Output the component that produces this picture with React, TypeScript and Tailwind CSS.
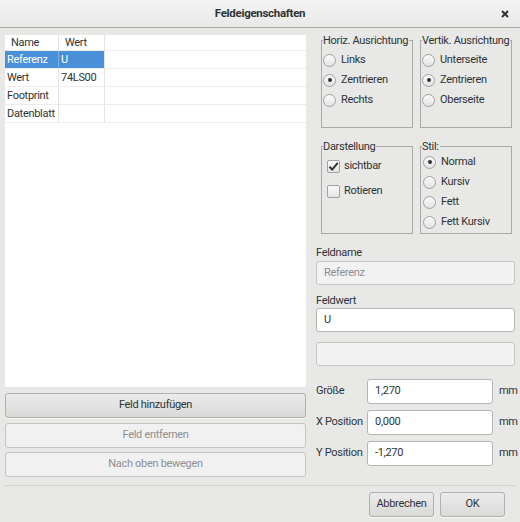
import React from "react";

const font = { fontFamily: "Roboto, 'Noto Sans', sans-serif" };

function Radio({ checked, label }: { checked?: boolean; label: string }) {
  return (
    <div className="flex h-[20px] items-center gap-[5px] whitespace-nowrap">
      <span className="flex h-[13px] w-[13px] shrink-0 items-center justify-center rounded-full border border-[#a1a1a1] bg-gradient-to-b from-[#fbfbfb] to-[#e3e3e3]">
        {checked && <span className="h-[4px] w-[4px] rounded-full bg-[#2e3436]" />}
      </span>
      <span>{label}</span>
    </div>
  );
}

function Check({ checked, label }: { checked?: boolean; label: string }) {
  return (
    <div className="flex h-[25px] items-center gap-[4px] whitespace-nowrap pl-[5px]">
      <span className="flex h-[13px] w-[13px] shrink-0 items-center justify-center rounded-[2px] border border-[#a1a1a1] bg-gradient-to-b from-[#fbfbfb] to-[#e3e3e3]">
        {checked && (
          <svg width="11" height="11" viewBox="0 0 11 11">
            <path d="M1.5 5.8 L4.2 8.6 L9.8 1.8" fill="none" stroke="#2e3436" strokeWidth="2" />
          </svg>
        )}
      </span>
      <span>{label}</span>
    </div>
  );
}

function Group({ title, children }: { title: string; children: React.ReactNode }) {
  return (
    <div className="relative h-[88px] w-[92px] border border-[#a9a9a7]">
      <span className="absolute left-[1px] top-[-7px] whitespace-nowrap bg-[#e8e8e7] pr-[1px] leading-[14px]">
        {title}
      </span>
      {children}
    </div>
  );
}

function Btn({ children, disabled, className }: { children: React.ReactNode; disabled?: boolean; className?: string }) {
  return (
    <div
      className={
        "flex items-center justify-center whitespace-nowrap rounded-[3px] border " +
        (disabled
          ? "border-[#c5c5c3] bg-[#f1f1f1] text-[#8f9091]"
          : "border-[#b0b0ae] bg-gradient-to-b from-[#ececec] to-[#d9d9d8] text-[#2e3436] shadow-[0_1px_0_rgba(255,255,255,0.6)]") +
        " " +
        (className ?? "")
      }
    >
      {children}
    </div>
  );
}

function Input({ value, disabled, className }: { value?: string; disabled?: boolean; className?: string }) {
  return (
    <div
      className={
        "flex items-center rounded-[3px] border px-[7px] " +
        (disabled ? "border-[#c5c5c3] bg-[#f2f2f2] text-[#8f9091]" : "border-[#b6b6b3] bg-white text-[#2e3436]") +
        " " +
        (className ?? "")
      }
    >
      {value}
    </div>
  );
}

export default function App() {
  const rows = [
    ["Referenz", "U"],
    ["Wert", "74LS00"],
    ["Footprint", ""],
    ["Datenblatt", ""],
  ];
  return (
    <div
      style={font}
      className="flex h-[522px] w-[520px] flex-col bg-[#e8e8e7] text-[11px] tracking-[-0.3px] text-[#2e3436]"
    >
      {/* title bar */}
      <div className="relative flex h-[28px] items-center justify-center border-b border-[#a8a8a6] bg-gradient-to-b from-[#f4f4f4] to-[#e9e9e8]">
        <span className="text-[11.5px] font-bold tracking-[-0.3px] text-[#2e3436]">Feldeigenschaften</span>
        <svg className="absolute right-[11px] top-[10px]" width="8" height="8" viewBox="0 0 8 8">
          <path d="M1 1 L7 7 M7 1 L1 7" stroke="#2e3436" strokeWidth="2" />
        </svg>
      </div>

      {/* body */}
      <div className="flex flex-1 gap-[10px] px-[5px] pt-[7px]">
        {/* left */}
        <div className="flex w-[301px] flex-col">
          <div className="h-[352px] bg-white">
            <div className="flex h-[16px] border-b border-[#ececec] leading-[16px]">
              <div className="w-[54px] border-r border-[#e4e4e4] pl-[6px]">Name</div>
              <div className="w-[46px] border-r border-[#e4e4e4] pl-[6px]">Wert</div>
            </div>
            {rows.map(([n, w], i) => (
              <div key={n} className="flex h-[18px] border-b border-[#ececec] leading-[17px]">
                <div
                  className={
                    "w-[54px] border-r pl-[2px] " +
                    (i === 0 ? "border-[#7fb0e4] bg-[#4a90d9] text-white" : "border-[#e4e4e4]")
                  }
                >
                  {n}
                </div>
                <div
                  className={
                    "w-[46px] border-r pl-[2px] " +
                    (i === 0 ? "border-[#e4e4e4] bg-[#4a90d9] text-white" : "border-[#e4e4e4]")
                  }
                >
                  {w}
                </div>
              </div>
            ))}
          </div>
          <div className="mt-[6px] flex flex-col gap-[4.5px]">
            <Btn className="h-[25px]">Feld hinzufügen</Btn>
            <Btn className="h-[25px]" disabled>
              Feld entfernen
            </Btn>
            <Btn className="h-[25px]" disabled>
              Nach oben bewegen
            </Btn>
          </div>
        </div>

        {/* right */}
        <div className="flex w-[199px] flex-col">
          <div className="mt-[5px] flex gap-[7px] pl-[5px]">
            <Group title="Horiz. Ausrichtung">
              <div className="pl-[1px] pt-[9px]">
                <Radio label="Links" />
                <Radio label="Zentrieren" checked />
                <Radio label="Rechts" />
              </div>
            </Group>
            <Group title="Vertik. Ausrichtung">
              <div className="pl-[1px] pt-[9px]">
                <Radio label="Unterseite" />
                <Radio label="Zentrieren" checked />
                <Radio label="Oberseite" />
              </div>
            </Group>
          </div>
          <div className="mt-[18px] flex gap-[7px] pl-[5px]">
            <Group title="Darstellung">
              <div className="pt-[7px]">
                <Check label="sichtbar" checked />
                <Check label="Rotieren" />
              </div>
            </Group>
            <Group title="Stil:">
              <div className="pl-[2px] pt-[5px]">
                <Radio label="Normal" checked />
                <Radio label="Kursiv" />
                <Radio label="Fett" />
                <Radio label="Fett Kursiv" />
              </div>
            </Group>
          </div>

          <div className="mt-[11px] h-[16px] leading-[16px]">Feldname</div>
          <Input className="h-[24px]" value="Referenz" disabled />
          <div className="mt-[8px] h-[15px] leading-[15px]">Feldwert</div>
          <Input className="h-[24px]" value="U" />
          <Input className="mt-[10px] h-[24px]" disabled />

          <div className="mt-[13px] flex flex-col gap-[6px]">
            {[
              ["Größe", "1,270"],
              ["X Position", "0,000"],
              ["Y Position", "-1,270"],
            ].map(([l, v]) => (
              <div key={l} className="flex h-[25px] items-center">
                <div className="w-[51px] shrink-0 whitespace-nowrap">{l}</div>
                <Input className="h-[25px] w-[126px] shrink-0" value={v} />
                <div className="ml-[6px]">mm</div>
              </div>
            ))}
          </div>
        </div>
      </div>

      {/* separator */}
      <div className="mx-[4px] h-px bg-[#d3d3d1]" />

      {/* footer */}
      <div className="flex h-[36px] justify-end gap-[6px] pr-[15px] pt-[6px]">
        <Btn className="h-[25px] w-[65px]">Abbrechen</Btn>
        <Btn className="h-[25px] w-[65px]">OK</Btn>
      </div>
    </div>
  );
}
